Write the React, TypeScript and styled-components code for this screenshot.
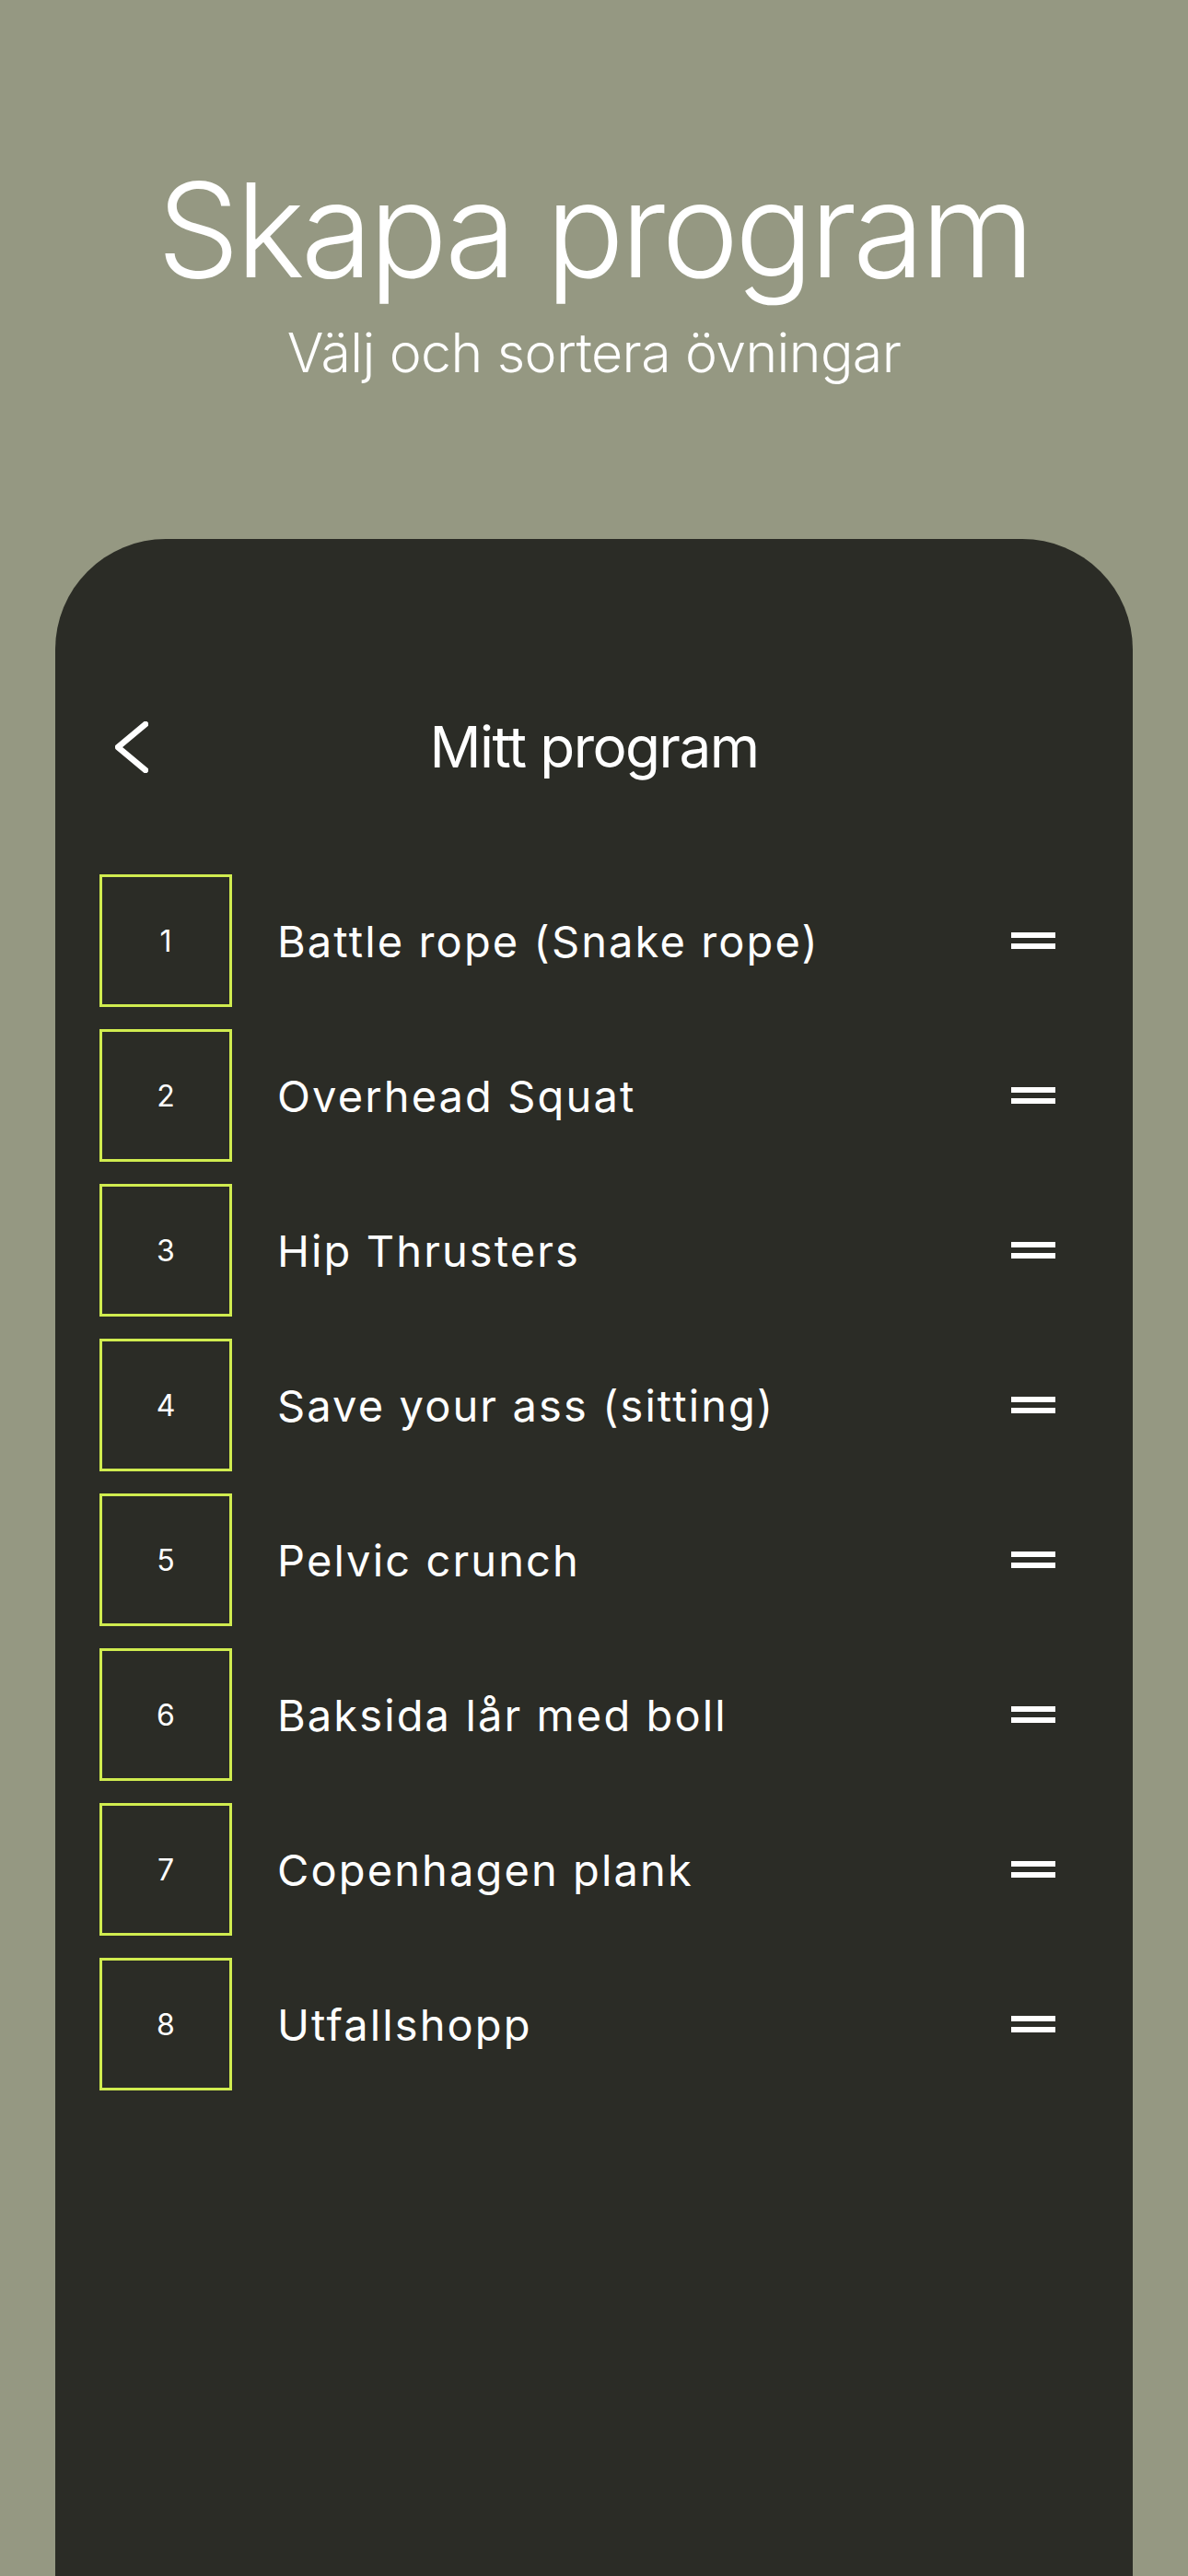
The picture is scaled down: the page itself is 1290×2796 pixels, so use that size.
import React from 'react';
import styled, { createGlobalStyle } from 'styled-components';

const GlobalStyle = createGlobalStyle`
  html, body {
    margin: 0;
    padding: 0;
    background: #959882;
  }
  body {
    font-family: Inter, "Noto Sans", sans-serif;
    color: #ffffff;
  }
`;

const Page = styled.div`
  min-height: 2796px;
  display: flex;
  flex-direction: column;
  background: #959882;
`;

const Hero = styled.header`
  padding-top: 178px;
  display: flex;
  flex-direction: column;
  align-items: center;
  gap: 33px;
  margin-bottom: 173px;
`;

const HeroTitle = styled.h1`
  margin: 0;
  font-size: 142px;
  line-height: 1;
  font-weight: 300;
  letter-spacing: -0.03em;
`;

const HeroSubtitle = styled.p`
  margin: 0;
  font-size: 59px;
  line-height: 1;
  font-weight: 300;
  letter-spacing: -0.01em;
`;

const Card = styled.section`
  flex: 1;
  margin: 0 60px;
  background: #2b2c26;
  border-radius: 120px 120px 0 0;
  padding: 195px 84px 0 48px;
`;

const NavBar = styled.div`
  display: grid;
  grid-template-columns: 1fr auto 1fr;
  align-items: center;
  margin-bottom: 107px;
`;

const BackButton = styled.button`
  background: none;
  border: none;
  padding: 0;
  margin-left: 17px;
  justify-self: start;
  display: flex;
  cursor: pointer;
`;

const NavTitle = styled.h2`
  margin: 0 0 0 36px;
  font-size: 62px;
  line-height: 1;
  font-weight: 400;
  letter-spacing: -0.025em;
`;

const List = styled.ol`
  list-style: none;
  margin: 0;
  padding: 0;
  display: flex;
  flex-direction: column;
  gap: 24px;
`;

const Row = styled.li`
  display: flex;
  align-items: center;
`;

const NumberBox = styled.div`
  width: 144px;
  height: 144px;
  box-sizing: border-box;
  border: 3px solid #d0ec4f;
  display: flex;
  align-items: center;
  justify-content: center;
  font-size: 32px;
  font-weight: 400;
  flex-shrink: 0;
`;

const Name = styled.span`
  flex: 1;
  margin-left: 49px;
  font-size: 47px;
  font-weight: 400;
  letter-spacing: 0.045em;
`;

const Handle = styled.div`
  width: 48px;
  display: flex;
  flex-direction: column;
  gap: 6px;

  span {
    display: block;
    height: 6px;
    background: #ffffff;
  }
`;

const exercises = [
  'Battle rope (Snake rope)',
  'Overhead Squat',
  'Hip Thrusters',
  'Save your ass (sitting)',
  'Pelvic crunch',
  'Baksida lår med boll',
  'Copenhagen plank',
  'Utfallshopp',
];

const App: React.FC = () => {
  return (
    <>
      <GlobalStyle />
      <Page>
        <Hero>
          <HeroTitle>Skapa program</HeroTitle>
          <HeroSubtitle>Välj och sortera övningar</HeroSubtitle>
        </Hero>
        <Card>
          <NavBar>
            <BackButton aria-label="Tillbaka">
              <svg width="36" height="56" viewBox="0 0 36 56" fill="none">
                <polyline
                  points="33,3 3,28 33,53"
                  stroke="#ffffff"
                  strokeWidth="6.5"
                  strokeLinecap="round"
                  strokeLinejoin="round"
                />
              </svg>
            </BackButton>
            <NavTitle>Mitt program</NavTitle>
            <div />
          </NavBar>
          <List>
            {exercises.map((name, i) => (
              <Row key={name}>
                <NumberBox>{i + 1}</NumberBox>
                <Name>{name}</Name>
                <Handle>
                  <span />
                  <span />
                </Handle>
              </Row>
            ))}
          </List>
        </Card>
      </Page>
    </>
  );
};

export default App;
